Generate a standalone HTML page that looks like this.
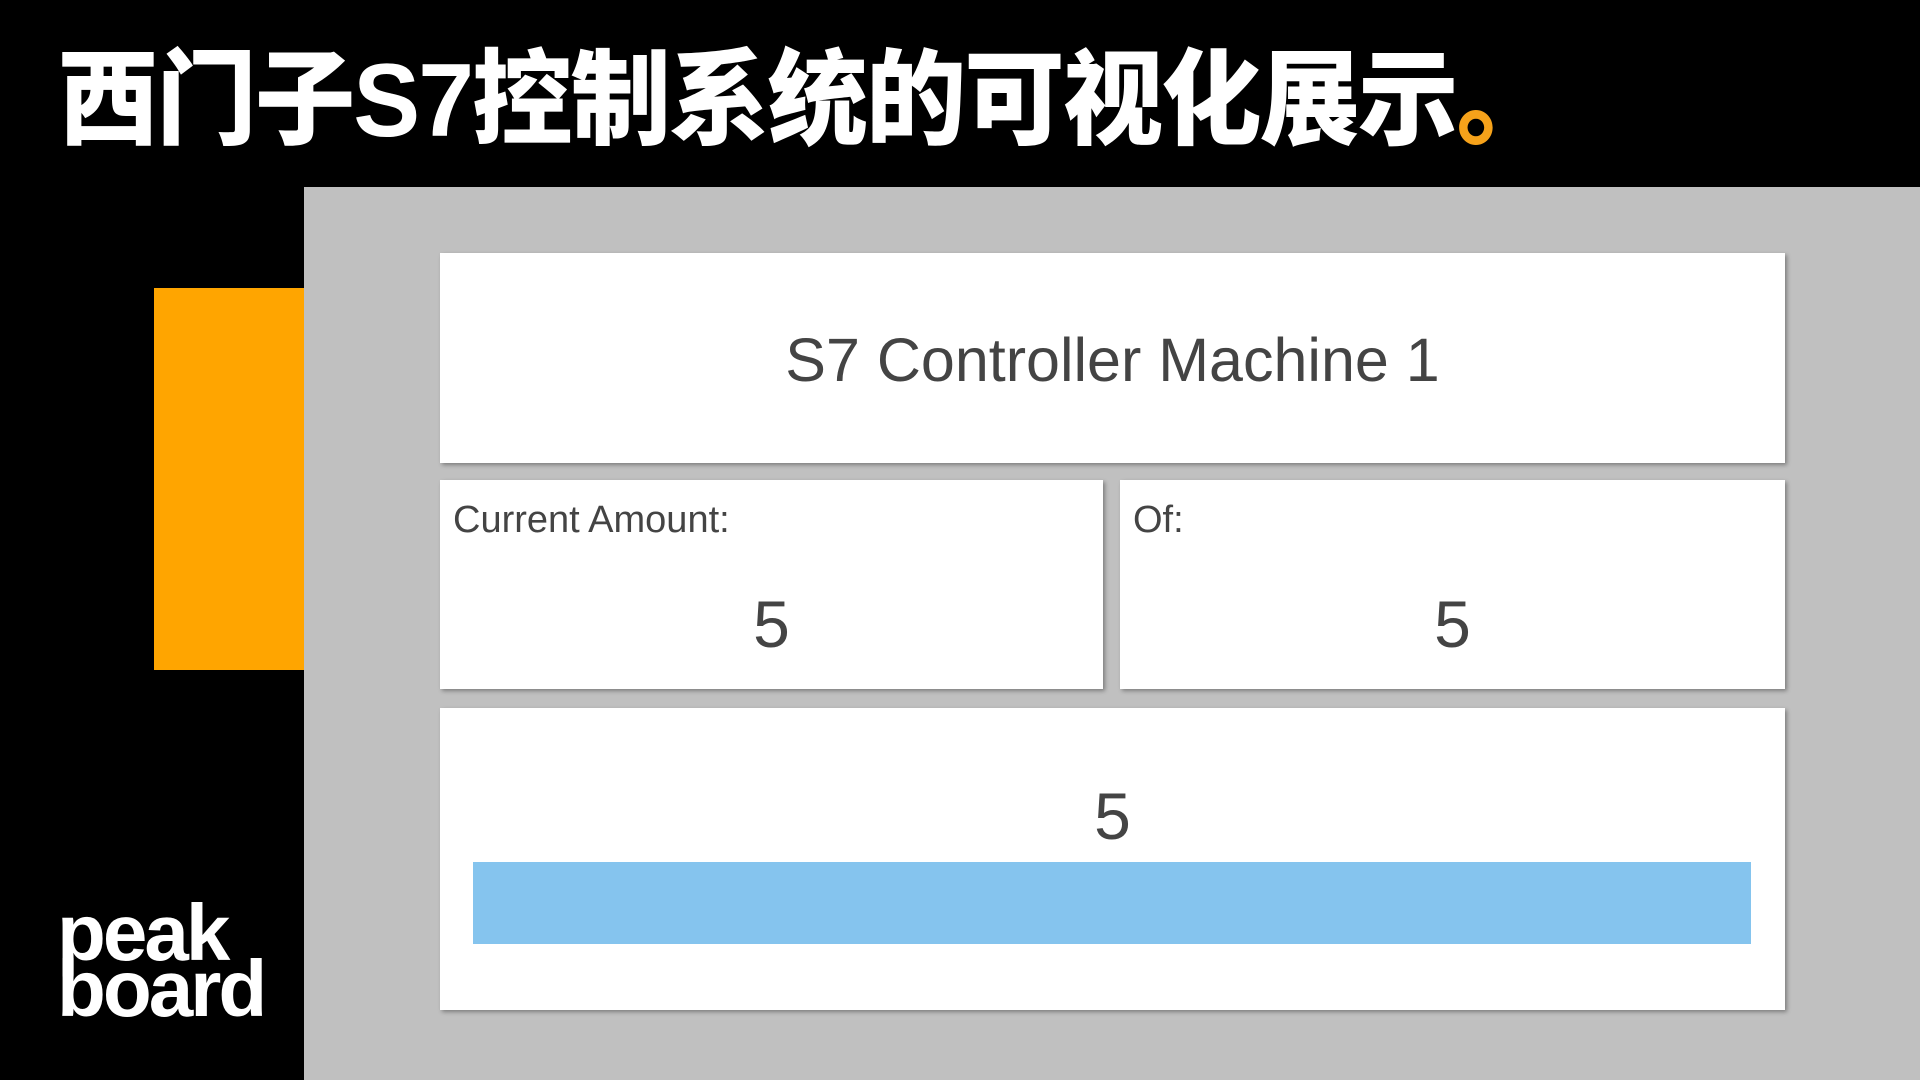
<!DOCTYPE html>
<html><head><meta charset="utf-8"><style>
body{margin:0;width:1920px;height:1080px;background:#000;position:relative;overflow:hidden;font-family:"Liberation Sans",sans-serif}
.title{position:absolute;left:58px;top:36px;font-family:"Liberation Sans","Noto Sans CJK SC",sans-serif;font-weight:900;font-size:104px;color:#fff;letter-spacing:-2px;white-space:nowrap;line-height:130px;transform:scaleX(0.965);transform-origin:left}
.title span{color:#F6A21A}
.orange{position:absolute;left:154px;top:288px;width:150px;height:382px;background:#FFA500}
.panel{position:absolute;left:304px;top:187px;width:1616px;height:893px;background:#C0C0C0}
.card{position:absolute;background:#fff;box-shadow:2px 2px 4px rgba(0,0,0,.35);color:#444}
.big{position:absolute;width:100%;text-align:center;font-size:66px}
.lbl{position:absolute;left:13px;top:19px;font-size:38px}
.bar{position:absolute;left:473px;top:862px;width:1278px;height:82px;background:#85C4EE}
.logo{position:absolute;left:57px;top:905px;color:#fff;font-weight:bold;font-size:80px;line-height:56px;letter-spacing:-3px}
</style></head><body>
<div class="title">西门子S7控制系统的可视化展示<span>。</span></div>
<div class="orange"></div>
<div class="panel"></div>
<div class="card" style="left:440px;top:253px;width:1345px;height:210px"><div class="big" style="top:72px;font-size:61px">S7 Controller Machine 1</div></div>
<div class="card" style="left:440px;top:480px;width:663px;height:209px"><div class="lbl">Current Amount:</div><div class="big" style="top:106px">5</div></div>
<div class="card" style="left:1120px;top:480px;width:665px;height:209px"><div class="lbl">Of:</div><div class="big" style="top:106px">5</div></div>
<div class="card" style="left:440px;top:708px;width:1345px;height:302px"><div class="big" style="top:70px">5</div></div>
<div class="bar"></div>
<div class="logo">peak<br>board</div>
</body></html>
